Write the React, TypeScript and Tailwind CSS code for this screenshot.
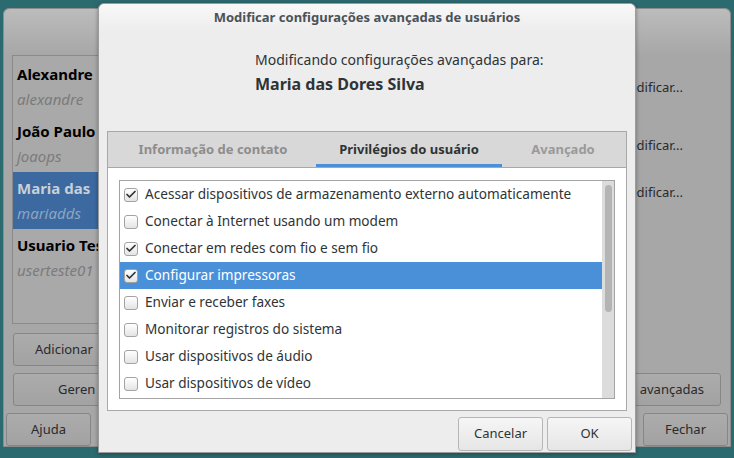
import { Check } from "lucide-react";

const privileges = [
  { label: "Acessar dispositivos de armazenamento externo automaticamente", checked: true },
  { label: "Conectar à Internet usando um modem", checked: false },
  { label: "Conectar em redes com fio e sem fio", checked: true },
  { label: "Configurar impressoras", checked: true, selected: true },
  { label: "Enviar e receber faxes", checked: false },
  { label: "Monitorar registros do sistema", checked: false },
  { label: "Usar dispositivos de áudio", checked: false },
  { label: "Usar dispositivos de vídeo", checked: false },
];

const users = [
  { name: "Alexandre", login: "alexandre" },
  { name: "João Paulo", login: "joaops" },
  { name: "Maria das", login: "mariadds", selected: true },
  { name: "Usuario Teste", login: "userteste01" },
];

const Checkbox = ({ checked }: { checked: boolean }) => (
  <div className="w-[14px] h-[14px] shrink-0 rounded-[3px] border border-[#a3a3a3] bg-gradient-to-b from-white to-[#e4e4e4] flex items-center justify-center">
    {checked && <Check size={13} strokeWidth={3.5} className="text-[#2e3436] -mt-[1px]" />}
  </div>
);

const BackButton = ({ children, className = "" }: { children: React.ReactNode; className?: string }) => (
  <div
    className={`h-[33px] flex items-center justify-center overflow-hidden whitespace-nowrap rounded-[3px] border border-[#868686] bg-gradient-to-b from-[#acacac] to-[#a2a2a2] text-[13px] text-[#2a2a2a] ${className}`}
  >
    {children}
  </div>
);

const DialogButton = ({ children }: { children: React.ReactNode }) => (
  <div className="w-[85px] h-[34px] flex items-center justify-center rounded-[3px] border border-[#b6b6b6] bg-gradient-to-b from-[#f6f6f6] to-[#e6e6e6] text-[13px] text-[#2e3436]">
    {children}
  </div>
);

export default function App() {
  return (
    <div
      className="relative w-[734px] h-[458px] overflow-hidden bg-[#2b6a6f]"
      style={{ fontFamily: '"Noto Sans", "Open Sans", sans-serif' }}
    >
      {/* Main window, greyed out behind the modal */}
      <div className="absolute left-[3px] top-[8px] w-[728px] h-[439px] rounded-t-[6px] border border-[#8c8c8c] bg-[#a7a7a7] flex flex-col">
        <div className="h-[46px] rounded-t-[6px] bg-gradient-to-b from-[#bcbcbc] to-[#a7a7a7]" />
        <div className="flex flex-1 px-[8px]">
          <div className="w-[96px] flex flex-col">
            <div className="h-[269px] border border-[#8a8a8a] bg-[#a9a9a9] pt-[2px] overflow-hidden">
              {users.map((u) => (
                <div
                  key={u.login}
                  className={`h-[57px] px-[4px] flex flex-col justify-center leading-none ${
                    u.selected ? "bg-[#3b69a0]" : ""
                  }`}
                >
                  <div
                    className={`text-[15px] font-bold whitespace-nowrap ${
                      u.selected ? "text-[#c9cfd6]" : "text-black"
                    }`}
                  >
                    {u.name}
                  </div>
                  <div
                    className={`mt-[10px] text-[15px] italic whitespace-nowrap ${
                      u.selected ? "text-[#8ea5c2]" : "text-[#7b7b7b]"
                    }`}
                  >
                    {u.login}
                  </div>
                </div>
              ))}
            </div>
          </div>
          <div className="flex-1 flex flex-col items-end pr-[39px] pt-[26px] text-[13px] text-[#2a2a2a] leading-none">
            <div className="whitespace-nowrap">Modificar...</div>
            <div className="whitespace-nowrap mt-[45px]">Modificar...</div>
            <div className="whitespace-nowrap mt-[34px]">Modificar...</div>
          </div>
        </div>
        <div className="px-[9px] flex flex-col gap-[7px] pb-[7px]">
          <div className="flex">
            <BackButton className="w-[100px] justify-start pl-[21px]">Adicionar</BackButton>
          </div>
          <div className="flex gap-[8px]">
            <BackButton className="w-[100px] justify-start pl-[44px]">Geren</BackButton>
            <BackButton className="flex-1 justify-end pr-[16px]">Configurações avançadas</BackButton>
          </div>
        </div>
        <div className="flex justify-between px-[2px]">
          <BackButton className="w-[85px]">Ajuda</BackButton>
          <BackButton className="w-[85px]">Fechar</BackButton>
        </div>
      </div>

      {/* Modal dialog */}
      <div className="absolute left-[98px] top-[3px] w-[538px] h-[450px] rounded-t-[6px] border border-[#9b9b9b] bg-[#ededed] shadow-[0_1px_4px_rgba(0,0,0,0.35)] flex flex-col">
        <div className="h-[27px] rounded-t-[6px] bg-gradient-to-b from-[#f8f8f8] to-[#ededed] flex items-center justify-center text-[13px] font-bold text-[#4b5257]">
          Modificar configurações avançadas de usuários
        </div>
        <div className="h-[100px] pl-[156px] pt-[19px] text-[#2e3436]">
          <div className="text-[14px] leading-[20px]">Modificando configurações avançadas para:</div>
          <div className="text-[16px] leading-[22px] mt-[3px] font-bold">Maria das Dores Silva</div>
        </div>

        {/* Notebook */}
        <div className="mx-[8px] h-[280px] border border-[#a8a8a8] flex flex-col">
          <div className="h-[36px] bg-[#d8d8d8] border-b border-[#a8a8a8] flex pl-[10px] gap-[8px] text-[13px] font-bold">
            <div className="w-[190px] flex items-center justify-center text-[#8d8d8d]">Informação de contato</div>
            <div className="w-[186px] flex items-center justify-center text-[#2e3436] border-b-[3px] border-[#4a90d9] pt-[3px]">
              Privilégios do usuário
            </div>
            <div className="w-[106px] flex items-center justify-center text-[#9a9a9a]">Avançado</div>
          </div>
          <div className="flex-1 bg-white px-[11px] pt-[12px] pb-[11px]">
            <div className="h-full border border-[#a3a3a3] flex">
              <div className="flex-1 flex flex-col">
                {privileges.map((p) => (
                  <div
                    key={p.label}
                    className={`h-[27px] pl-[4px] flex items-center gap-[7px] text-[13.6px] whitespace-nowrap ${
                      p.selected ? "bg-[#4a90d9] text-white" : "text-[#2e3436]"
                    }`}
                  >
                    <Checkbox checked={p.checked} />
                    {p.label}
                  </div>
                ))}
              </div>
              <div className="w-[12px] bg-[#dcdcdc] pt-[4px] flex justify-center">
                <div className="w-[7px] h-[127px] rounded-full bg-[#b4b4b4]" />
              </div>
            </div>
          </div>
        </div>

        <div className="flex justify-end gap-[4px] pr-[3px] pt-[6px]">
          <DialogButton>Cancelar</DialogButton>
          <DialogButton>OK</DialogButton>
        </div>
      </div>
    </div>
  );
}
